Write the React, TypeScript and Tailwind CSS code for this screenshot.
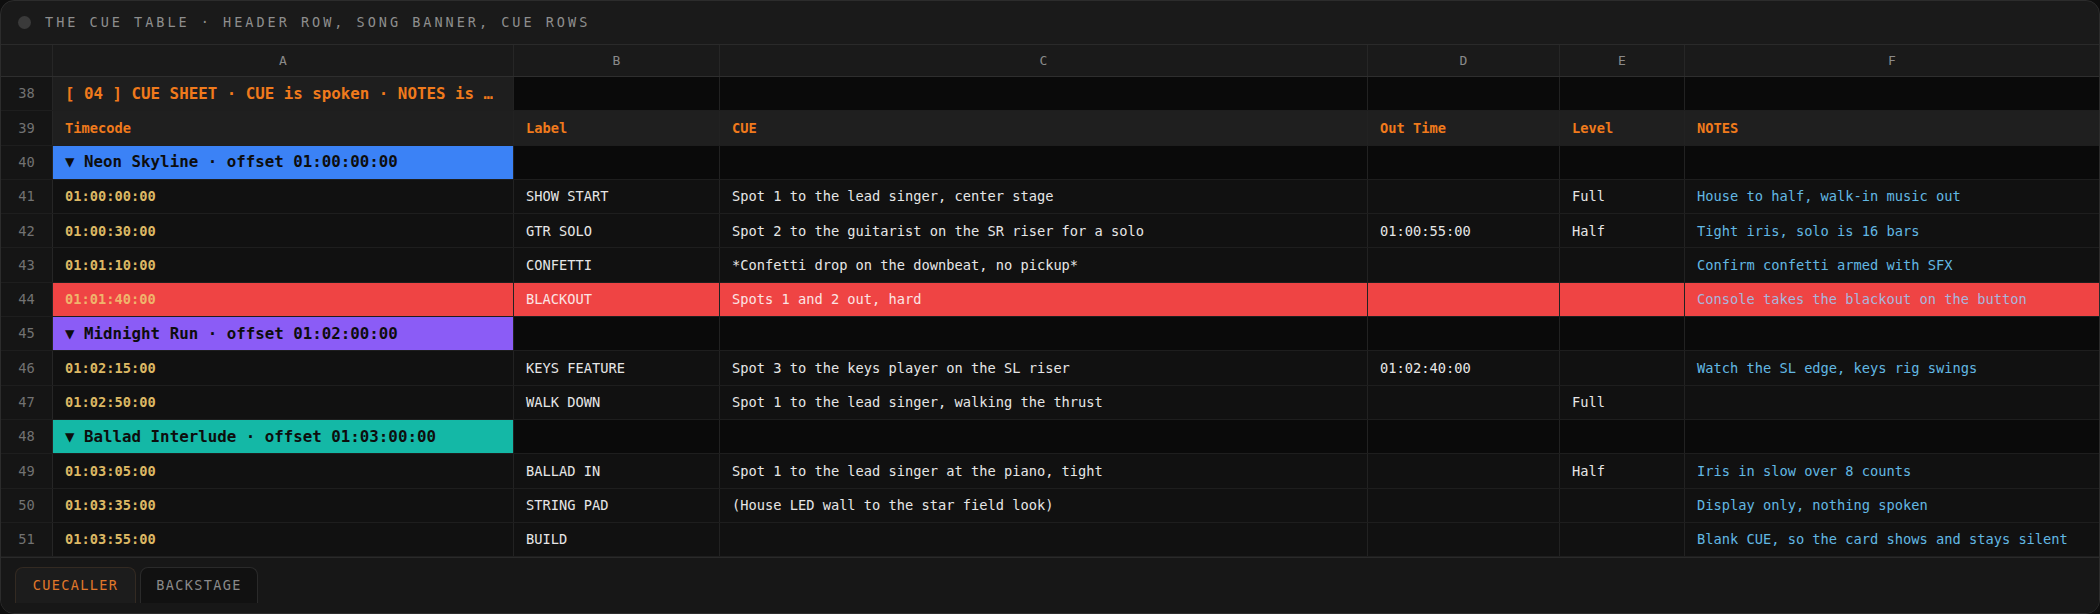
import React from 'react';

type Cue = {
  kind: 'cue';
  n: number;
  tc: string;
  label: string;
  cue: string;
  out: string;
  level: string;
  notes: string;
  alert?: boolean;
};

type Banner = {
  kind: 'banner';
  n: number;
  title: string;
  color: string;
};

type Row = Cue | Banner;

const COLS = ['A', 'B', 'C', 'D', 'E', 'F'];
const GRID = 'grid grid-cols-[52px_461px_206px_648px_192px_125px_1fr]';

const ROWS: Row[] = [
  { kind: 'banner', n: 40, title: 'Neon Skyline · offset 01:00:00:00', color: 'bg-[#3b82f6]' },
  { kind: 'cue', n: 41, tc: '01:00:00:00', label: 'SHOW START', cue: 'Spot 1 to the lead singer, center stage', out: '', level: 'Full', notes: 'House to half, walk-in music out' },
  { kind: 'cue', n: 42, tc: '01:00:30:00', label: 'GTR SOLO', cue: 'Spot 2 to the guitarist on the SR riser for a solo', out: '01:00:55:00', level: 'Half', notes: 'Tight iris, solo is 16 bars' },
  { kind: 'cue', n: 43, tc: '01:01:10:00', label: 'CONFETTI', cue: '*Confetti drop on the downbeat, no pickup*', out: '', level: '', notes: 'Confirm confetti armed with SFX' },
  { kind: 'cue', n: 44, tc: '01:01:40:00', label: 'BLACKOUT', cue: 'Spots 1 and 2 out, hard', out: '', level: '', notes: 'Console takes the blackout on the button', alert: true },
  { kind: 'banner', n: 45, title: 'Midnight Run · offset 01:02:00:00', color: 'bg-[#8b5cf6]' },
  { kind: 'cue', n: 46, tc: '01:02:15:00', label: 'KEYS FEATURE', cue: 'Spot 3 to the keys player on the SL riser', out: '01:02:40:00', level: '', notes: 'Watch the SL edge, keys rig swings' },
  { kind: 'cue', n: 47, tc: '01:02:50:00', label: 'WALK DOWN', cue: 'Spot 1 to the lead singer, walking the thrust', out: '', level: 'Full', notes: '' },
  { kind: 'banner', n: 48, title: 'Ballad Interlude · offset 01:03:00:00', color: 'bg-[#14b8a6]' },
  { kind: 'cue', n: 49, tc: '01:03:05:00', label: 'BALLAD IN', cue: 'Spot 1 to the lead singer at the piano, tight', out: '', level: 'Half', notes: 'Iris in slow over 8 counts' },
  { kind: 'cue', n: 50, tc: '01:03:35:00', label: 'STRING PAD', cue: '(House LED wall to the star field look)', out: '', level: '', notes: 'Display only, nothing spoken' },
  { kind: 'cue', n: 51, tc: '01:03:55:00', label: 'BUILD', cue: '', out: '', level: '', notes: 'Blank CUE, so the card shows and stays silent' },
];

const RowNum: React.FC<{ n: number }> = ({ n }) => (
  <div className="flex items-center justify-center bg-[#151515] text-[#727272] font-normal border-r border-[#262626]">{n}</div>
);

const Cell: React.FC<{ className?: string; children?: React.ReactNode }> = ({ className = '', children }) => (
  <div className={`flex items-center px-3 border-r border-[#222] whitespace-nowrap overflow-hidden ${className}`}>{children}</div>
);

const CueRow: React.FC<{ row: Row }> = ({ row }) => {
  if (row.kind === 'banner') {
    return (
      <div className={`${GRID} h-[34.3px] border-b border-[#1e1e1e]`}>
        <RowNum n={row.n} />
        <Cell className={`${row.color} text-[#0d0d0d] text-[15.8px] font-semibold border-[#1e1e1e]`}>▼ {row.title}</Cell>
        <Cell className="bg-[#0a0a0a]" />
        <Cell className="bg-[#0a0a0a]" />
        <Cell className="bg-[#0a0a0a]" />
        <Cell className="bg-[#0a0a0a]" />
        <Cell className="bg-[#0a0a0a] border-r-0" />
      </div>
    );
  }
  const bg = row.alert ? 'bg-[#ef4444] border-[#7f1d1d]' : 'bg-[#111111]';
  return (
    <div className={`${GRID} h-[34.3px] border-b border-[#1e1e1e]`}>
      <RowNum n={row.n} />
      <Cell className={`${bg} font-semibold ${row.alert ? 'text-[#f0b46c]' : 'text-[#dcb864]'}`}>{row.tc}</Cell>
      <Cell className={`${bg} ${row.alert ? 'text-[#fbe4e4]' : 'text-[#e6e6e6]'}`}>{row.label}</Cell>
      <Cell className={`${bg} ${row.alert ? 'text-[#fbe4e4]' : 'text-[#e6e6e6]'}`}>{row.cue}</Cell>
      <Cell className={`${bg} text-[#e6e6e6]`}>{row.out}</Cell>
      <Cell className={`${bg} text-[#e6e6e6]`}>{row.level}</Cell>
      <Cell className={`${bg} border-r-0 ${row.alert ? 'text-[#a8b6dc]' : 'text-[#62b8e3]'}`}>{row.notes}</Cell>
    </div>
  );
};

export default function App() {
  return (
    <div className="h-[614px] w-[2100px] bg-[#0e0e0e] font-['DejaVu_Sans_Mono',monospace] text-[13.7px]">
      <div className="h-full flex flex-col rounded-[14px] border border-[#2c2c2c] bg-[#1a1a1a] overflow-hidden">
        {/* title bar */}
        <div className="h-[44px] shrink-0 flex items-center gap-[14px] px-[17px] border-b border-[#2a2a2a]">
          <span className="w-[13px] h-[13px] rounded-full bg-[#3a3a3a]" />
          <span className="text-[13.5px] tracking-[3px] text-[#8e8e8e]">THE CUE TABLE · HEADER ROW, SONG BANNER, CUE ROWS</span>
        </div>

        {/* column letters */}
        <div className={`${GRID} h-[32px] shrink-0 border-b border-[#2e2e2e] text-[#8a8a8a] text-[13px]`}>
          <div className="border-r border-[#262626]" />
          {COLS.map((c, i) => (
            <div key={c} className={`flex items-center justify-center ${i < 5 ? 'border-r border-[#262626]' : ''}`}>{c}</div>
          ))}
        </div>

        {/* sheet title row */}
        <div className={`${GRID} h-[34.3px] border-b border-[#1e1e1e]`}>
          <RowNum n={38} />
          <Cell className="bg-[#1e1e1e] text-[#f07a1c] text-[15.8px] font-semibold pr-1">
            <span className="truncate">[ 04 ] CUE SHEET · CUE is spoken · NOTES is …</span>
          </Cell>
          <Cell className="bg-[#0a0a0a]" />
          <Cell className="bg-[#0a0a0a]" />
          <Cell className="bg-[#0a0a0a]" />
          <Cell className="bg-[#0a0a0a]" />
          <Cell className="bg-[#0a0a0a] border-r-0" />
        </div>

        {/* header row */}
        <div className={`${GRID} h-[34.3px] border-b border-[#1e1e1e]`}>
          <RowNum n={39} />
          <Cell className="bg-[#1f1f1f] text-[#f07a1c] font-semibold">Timecode</Cell>
          <Cell className="bg-[#1f1f1f] text-[#f07a1c] font-semibold">Label</Cell>
          <Cell className="bg-[#1f1f1f] text-[#f07a1c] font-semibold">CUE</Cell>
          <Cell className="bg-[#1f1f1f] text-[#f07a1c] font-semibold">Out Time</Cell>
          <Cell className="bg-[#1f1f1f] text-[#f07a1c] font-semibold">Level</Cell>
          <Cell className="bg-[#1f1f1f] text-[#f07a1c] font-semibold border-r-0">NOTES</Cell>
        </div>

        {ROWS.map(r => (
          <CueRow key={r.n} row={r} />
        ))}

        {/* sheet tabs */}
        <div className="flex-1 flex items-end gap-[4px] px-[14px] pb-[10px] border-t border-[#2a2a2a] bg-[#171717]">
          <div className="h-[36px] w-[121px] flex items-center justify-center rounded-t-[8px] border border-b-0 border-[#332a22] bg-[#1c1c1c] text-[#e0782a] text-[13.5px] tracking-[0.1em]">
            CUECALLER
          </div>
          <div className="h-[36px] w-[118px] flex items-center justify-center rounded-t-[8px] border border-b-0 border-[#2a2a2a] bg-[#111111] text-[#8a8a8a] text-[13.5px] tracking-[0.1em]">
            BACKSTAGE
          </div>
        </div>
      </div>
    </div>
  );
}
